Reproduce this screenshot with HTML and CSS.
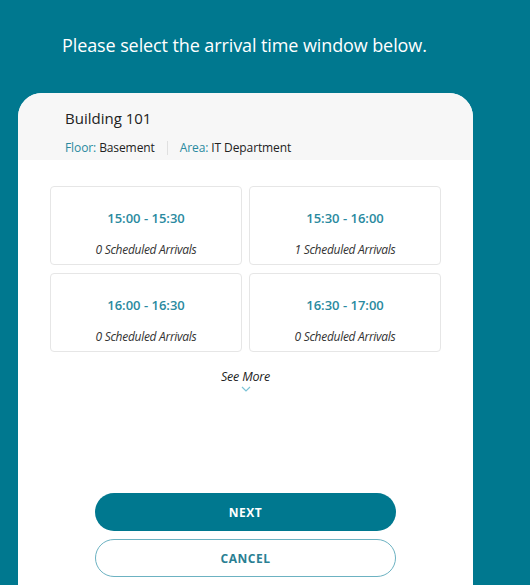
FILE: index.html
```html
<!DOCTYPE html>
<html>
<head>
<meta charset="utf-8">
<link rel="stylesheet" href="styles.css">
</head>
<body>
<div class="page">
  <h1 class="title">Please select the arrival time window below.</h1>
  <div class="card">
    <div class="card-head">
      <div class="building">Building 101</div>
      <div class="meta">
        <span class="meta-item"><span class="lbl">Floor:</span> Basement</span>
        <span class="sep"></span>
        <span class="meta-item"><span class="lbl">Area:</span> IT Department</span>
      </div>
    </div>
    <div class="card-body">
      <div class="slots">
        <div class="slot"><div class="time">15:00 - 15:30</div><div class="count">0 Scheduled Arrivals</div></div>
        <div class="slot"><div class="time">15:30 - 16:00</div><div class="count">1 Scheduled Arrivals</div></div>
        <div class="slot"><div class="time">16:00 - 16:30</div><div class="count">0 Scheduled Arrivals</div></div>
        <div class="slot"><div class="time">16:30 - 17:00</div><div class="count">0 Scheduled Arrivals</div></div>
      </div>
      <div class="more">
        <span>See More</span>
        <svg class="chev" width="10" height="6" viewBox="0 0 10 6"><path d="M1 1 L5 5 L9 1" fill="none" stroke="#7cc3d6" stroke-width="1.2"/></svg>
      </div>
      <div class="actions">
        <button class="btn btn-next">NEXT</button>
        <button class="btn btn-cancel">CANCEL</button>
      </div>
    </div>
  </div>
</div>
</body>
</html>
```
FILE: styles.css
```css
* { box-sizing: border-box; }
html, body { margin: 0; padding: 0; }
body {
  background: #00788f;
  font-family: "Open Sans", "Noto Sans", sans-serif;
  width: 530px;
  height: 585px;
  overflow: hidden;
}
.page {
  padding-top: 33px;
}
.title {
  margin: 0 0 36px 62px;
  font-size: 18px;
  font-weight: 400;
  color: #ffffff;
  line-height: 24px;
  letter-spacing: -0.1px;
}
.card {
  margin-left: 18px;
  width: 455px;
  height: 492px;
  background: #fff;
  border-radius: 24px 24px 0 0;
  overflow: hidden;
}
.card-head {
  background: #f7f7f7;
  height: 67px;
  padding: 15px 0 0 47px;
}
.building {
  font-size: 15px;
  color: #222;
  line-height: 20px;
}
.meta {
  margin-top: 12px;
  display: flex;
  align-items: center;
  font-size: 12px;
  color: #222;
  line-height: 16px;
  letter-spacing: -0.1px;
}
.lbl { color: #2a8aa0; }
.sep {
  width: 1px;
  height: 14px;
  background: #e0e0e0;
  margin: 0 12px;
}
.card-body {
  padding: 26px 32px 0 32px;
}
.slots {
  display: grid;
  grid-template-columns: 192px 192px;
  column-gap: 7px;
  row-gap: 8px;
}
.slot {
  height: 79px;
  border: 1px solid #e6e6e6;
  border-radius: 4px;
  display: flex;
  flex-direction: column;
  align-items: center;
  padding-top: 22px;
}
.time {
  font-size: 13px;
  font-weight: 600;
  color: #2a8aa0;
  line-height: 18px;
}
.count {
  margin-top: 16px;
  font-size: 12px;
  font-style: italic;
  color: #333;
  line-height: 14px;
  letter-spacing: -0.3px;
}
.more {
  margin-top: 17px;
  display: flex;
  flex-direction: column;
  align-items: center;
  font-size: 12.5px;
  font-style: italic;
  color: #222;
  line-height: 16px;
  letter-spacing: -0.2px;
}
.chev { margin-top: 1px; }
.actions {
  margin-top: 101px;
  display: flex;
  flex-direction: column;
  align-items: center;
  gap: 8px;
}
.btn {
  width: 301px;
  height: 38px;
  border-radius: 19px;
  font-family: "Open Sans", "Noto Sans", sans-serif;
  font-size: 12px;
  font-weight: 700;
  letter-spacing: 0.5px;
  padding: 0;
}
.btn-next {
  background: #00788f;
  color: #fff;
  border: none;
}
.btn-cancel {
  background: #fff;
  color: #2a7f93;
  border: 1.5px solid #6cb2c2;
}
```
